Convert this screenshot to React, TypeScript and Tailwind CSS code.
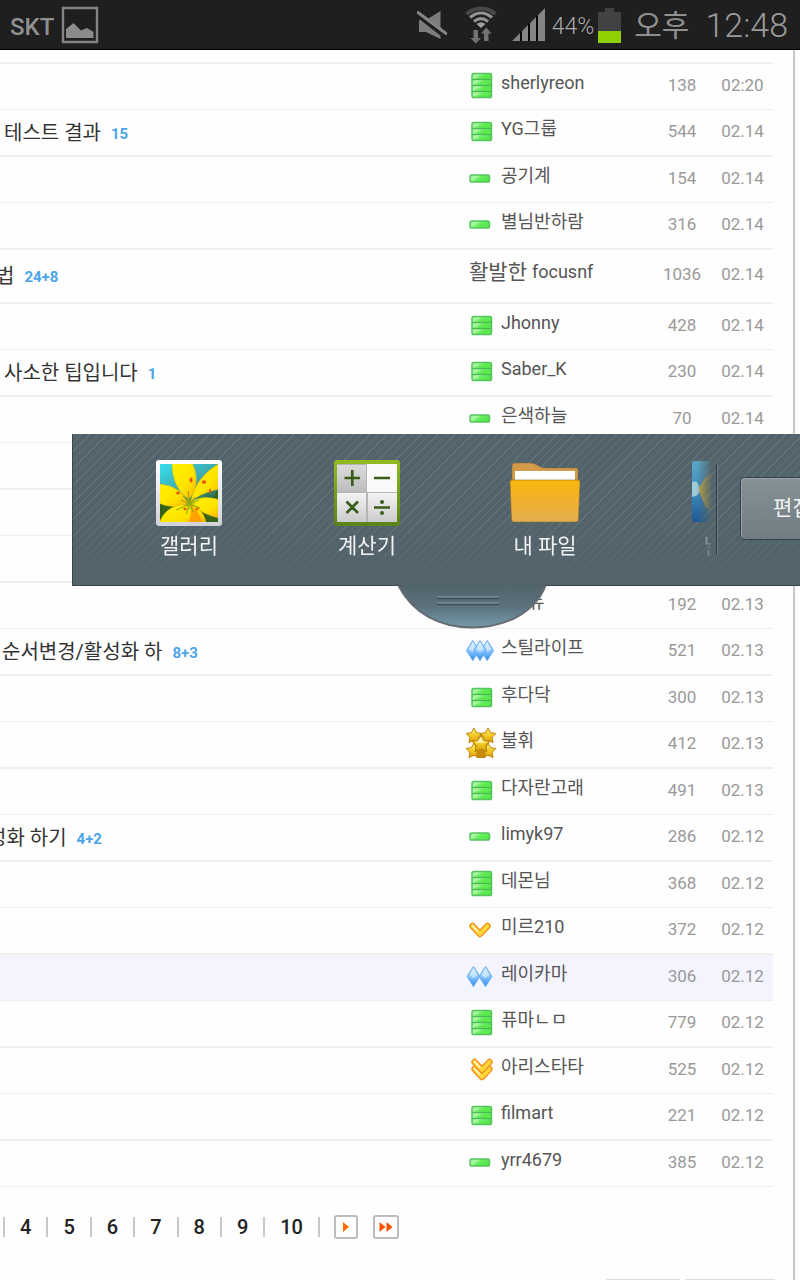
import React from "react";

type Rank = "bar1" | "bar3" | "bar4" | "chevron1" | "chevron2" | "gem2" | "gem3" | "stars" | "word" | "none";

interface Post {
  title?: string;
  indent?: string;
  comments?: string;
  rank: Rank;
  author: string;
  views?: number;
  date?: string;
  thick?: boolean;
  tall?: boolean;
  active?: boolean;
}

const posts: Post[] = [
  { rank: "bar4", author: "sherlyreon", views: 138, date: "02:20" },
  { title: "테스트 결과", indent: "pl-1", comments: "15", rank: "bar3", author: "YG그룹", views: 544, date: "02.14", thick: true },
  { rank: "bar1", author: "공기계", views: 154, date: "02.14" },
  { rank: "bar1", author: "별님반하람", views: 316, date: "02.14", thick: true },
  { title: "법", indent: "-ml-1", comments: "24+8", rank: "word", author: "focusnf", views: 1036, date: "02.14", thick: true, tall: true },
  { rank: "bar3", author: "Jhonny", views: 428, date: "02.14" },
  { title: "사소한 팁입니다", indent: "pl-1", comments: "1", rank: "bar3", author: "Saber_K", views: 230, date: "02.14", thick: true },
  { rank: "bar1", author: "은색하늘", views: 70, date: "02.14" },
  { rank: "none", author: "", thick: true },
  { rank: "none", author: "" },
  { rank: "none", author: "", thick: true },
  { rank: "none", author: "듀", views: 192, date: "02.13" },
  { title: "순서변경/활성화 하", comments: "8+3", rank: "gem3", author: "스틸라이프", views: 521, date: "02.13", thick: true },
  { rank: "bar3", author: "후다닥", views: 300, date: "02.13" },
  { rank: "stars", author: "불휘", views: 412, date: "02.13", thick: true },
  { rank: "bar3", author: "다자란고래", views: 491, date: "02.13" },
  { title: "성화 하기", indent: "-ml-3", comments: "4+2", rank: "bar1", author: "limyk97", views: 286, date: "02.12", thick: true },
  { rank: "bar4", author: "데몬님", views: 368, date: "02.12" },
  { rank: "chevron1", author: "미르210", views: 372, date: "02.12", thick: true },
  { rank: "gem2", author: "레이카마", views: 306, date: "02.12", active: true },
  { rank: "bar4", author: "퓨마ㄴㅁ", views: 779, date: "02.12", thick: true },
  { rank: "chevron2", author: "아리스타타", views: 525, date: "02.12" },
  { rank: "bar3", author: "filmart", views: 221, date: "02.12", thick: true },
  { rank: "bar1", author: "yrr4679", views: 385, date: "02.12" },
];

function Bars({ count }: { count: number }) {
  const x = count === 1 ? 4 : 6;
  const height = count === 1 ? 7 : count * 6;
  const top = count === 1 ? 12 : 15.5 - height / 2;
  const step = height / count;
  return (
    <>
      {Array.from({ length: count }, (_, i) => (
        <rect key={i} x={x} y={top + i * step} width="19.5" height={step} fill="url(#barFill)" />
      ))}
      {Array.from({ length: count - 1 }, (_, i) => (
        <path key={i} d={`M${x} ${top + (i + 1) * step}h19.5`} stroke="#4cb852" strokeWidth="1.3" />
      ))}
      <rect x={x} y={top} width="19.5" height={height} rx="1.8" fill="none" stroke="#56c45e" strokeWidth="1.5" />
    </>
  );
}

function Gem({ x }: { x: number }) {
  return (
    <>
      <path d={`M${x} 5.5L${x + 6.3} 15.5L${x} 25.5L${x - 6.3} 15.5Z`} fill="url(#gemFill)" stroke="#5aa7f2" strokeWidth="1" />
      <path d={`M${x} 7.5L${x + 4} 14L${x} 17L${x - 4} 14Z`} fill="#e2f3ff" opacity="0.65" />
    </>
  );
}

function Chevron({ x, y }: { x: number; y: number }) {
  const d = `M${x + 3} ${y + 3}L${x + 10.5} ${y + 11}L${x + 18} ${y + 3}`;
  return (
    <>
      <path d={d} fill="none" stroke="#f7921f" strokeWidth="6.4" strokeLinejoin="round" strokeLinecap="round" />
      <path d={d} fill="none" stroke="#ffd83a" strokeWidth="3.6" strokeLinejoin="round" strokeLinecap="round" />
      <path d={`M${x + 3} ${y + 2.5}L${x + 8} ${y + 8}`} fill="none" stroke="#fff3c4" strokeWidth="1.8" strokeLinecap="round" />
    </>
  );
}

const starPath = "M0-7.5L2.6-2.8L7.8-2L4.2 1.8L5 7L0 4.8L-5 7L-4.2 1.8L-7.8-2L-2.6-2.8Z";

function RankIcon({ rank }: { rank: Rank }) {
  return (
    <svg viewBox="0 0 30 30" className="size-[30px] shrink-0" aria-hidden="true">
      {rank === "bar1" && <Bars count={1} />}
      {rank === "bar3" && <Bars count={3} />}
      {rank === "bar4" && <Bars count={4} />}
      {rank === "gem3" && (<><Gem x={6.8} /><Gem x={21.2} /><Gem x={14} /></>)}
      {rank === "gem2" && (<><Gem x={7.5} /><Gem x={19.5} /></>)}
      {rank === "chevron1" && <Chevron x={3.5} y={9} />}
      {rank === "chevron2" && (<><Chevron x={5.5} y={12} /><Chevron x={5.5} y={5} /></>)}
      {rank === "stars" && (
        <g stroke="#bd830c" strokeWidth="1" strokeLinejoin="round" fill="url(#starFill)">
          <path d={starPath} transform="translate(8 7.500)" />
          <path d={starPath} transform="translate(22 7.500)" />
          <path d={starPath} transform="translate(8 22.500)" />
          <path d={starPath} transform="translate(22 22.500)" />
          <path d="M11 19H19V29.500H11Z" fill="#c88a0a" />
          <path d={starPath} transform="translate(15 15.500) scale(1.15)" />
          <path d="M15 9L17.500 14L21 15H10Z" fill="#fff8c0" stroke="none" opacity="0.8" />
        </g>
      )}
    </svg>
  );
}

function SharedGradients() {
  return (
    <svg className="absolute size-0" aria-hidden="true">
      <defs>
        <linearGradient id="barFill" x1="0" x2="1" y1="0" y2="0.5">
          <stop offset="0" stopColor="#7ef078" />
          <stop offset="0.3" stopColor="#b2f8a8" />
          <stop offset="0.6" stopColor="#62ec57" />
          <stop offset="1" stopColor="#58e84c" />
        </linearGradient>
        <linearGradient id="gemFill" x1="0" x2="0" y1="0" y2="1">
          <stop offset="0" stopColor="#d6edff" />
          <stop offset="0.5" stopColor="#8ac6fb" />
          <stop offset="1" stopColor="#2f8df2" />
        </linearGradient>
        <linearGradient id="starFill" x1="0" x2="0" y1="0" y2="1">
          <stop offset="0" stopColor="#fff08a" />
          <stop offset="0.5" stopColor="#f4cc24" />
          <stop offset="1" stopColor="#dca00e" />
        </linearGradient>
      </defs>
    </svg>
  );
}

function StatusBar() {
  return (
    <header className="flex h-[50px] items-center border-b border-black bg-[#1f1f1f] pr-3 pl-[10px] text-[#909090]">
      <span className="w-[51px] pt-1 font-['Roboto',sans-serif] text-[24px] leading-none font-medium">SKT</span>
      <svg viewBox="0 0 38 38" className="size-[38px]" aria-label="사진">
        <path d="M2 2H36V36H2Z" fill="none" stroke="#858585" strokeWidth="2.4" />
        <path d="M5 32V23L12.500 17L20 24.500L26 22L32.500 26V32Z" fill="#8c8c8c" />
      </svg>
      <div className="ml-auto flex items-center">
        <svg viewBox="0 0 30 30" className="mr-[18px] size-[30px]" aria-label="음소거">
          <path d="M2 10H9L23.500 1V29L9 22H2Z" fill="#7c7c7c" />
          <path d="M0 3.500L30 27" stroke="#1f1f1f" strokeWidth="6" />
          <path d="M1 2.500L29 23.500" stroke="#858585" strokeWidth="3" strokeLinecap="round" />
        </svg>
        <svg viewBox="0 0 32 38" className="mr-[15px] h-[38px] w-8" aria-label="와이파이">
          <g fill="none">
            <path d="M1.500 8C10 0.500 22 0.500 30.500 8" stroke="#484848" strokeWidth="4" />
            <path d="M5 11.500C12 5.500 20 5.500 27 11.500" stroke="#929292" strokeWidth="3.200" />
            <path d="M9 15.500C14 11.500 18 11.500 23 15.500" stroke="#929292" strokeWidth="3.200" />
          </g>
          <path d="M11.500 18Q16 14.500 20.500 18L16 22Z" fill="#a0a0a0" />
          <path d="M8.500 24H13V32H16L10.800 37.500L5.500 32H8.500ZM19 35V27.500H16L21.300 21.500L26.500 27.500H23.500V35Z" fill="#727272" />
        </svg>
        <svg viewBox="0 0 34 34" className="mr-[6px] size-[34px]" aria-label="신호">
          <path d="M0 33L33 0V33Z" fill="#080808" />
          <path d="M0 33L8 25V33ZM10 33V23L16 17V33ZM18 33V15L24 9V33ZM26 33V7L33 0V33Z" fill="#848484" />
        </svg>
        <span className="mr-1 pt-1 font-['Roboto',sans-serif] text-[23px] leading-none font-light text-[#aaaaaa]">44%</span>
        <svg viewBox="0 0 23 36" className="mr-[13px] h-9 w-[23px]" aria-label="배터리">
          <path d="M0 5H7V1H16V5H23V24H0Z" fill="#424242" />
          <path d="M0 24H23V36H0Z" fill="#91d000" />
        </svg>
        <span className="mr-4 pb-1 font-['Noto_Sans_CJK_KR',sans-serif] text-[30px] leading-none">오후</span>
        <time className="font-['Roboto',sans-serif] text-[34px] leading-none font-light text-[#9a9a9a]">12:48</time>
      </div>
    </header>
  );
}

function PostTable() {
  return (
    <table className="w-full table-fixed border-separate border-spacing-0 border-t-2 border-[#efefef]">
      <colgroup>
        <col />
        <col className="w-[186px]" />
        <col className="w-[60px]" />
        <col className="w-[61px]" />
      </colgroup>
      <tbody>
        {posts.map((p, i) => {
          const line = `${p.tall ? "h-[54px]" : p.thick ? "h-[47px]" : "h-[46px]"} ${p.thick ? "border-b-2" : "border-b"} border-[#efefef] ${p.active ? "bg-[#f4f4ff]" : ""}`;
          const meta = `${line} pb-1 text-center text-[17px] leading-6 text-[#999999]`;
          return (
            <tr key={i}>
              <td className={`${line} overflow-hidden whitespace-nowrap`}>
                {p.title && (
                  <div className={`flex items-center gap-[10px] ${p.indent ?? "pl-[2px]"}`}>
                    <a href="#" className="text-[20px] leading-7 text-[#333333]">{p.title}</a>
                    <a href="#" className="pt-[2px] text-[15px] leading-6 font-bold text-[#4ba5e9]">{p.comments}</a>
                  </div>
                )}
              </td>
              <td className={`${line} pb-1`}>
                <div className="flex items-center gap-[5px] text-[#555555]">
                  {p.rank === "word" ? (
                    <span className="pb-1 pl-[3px] text-[21px] leading-6">활발한</span>
                  ) : (
                    <RankIcon rank={p.rank} />
                  )}
                  <a href="#" className={`pb-1 text-[18px] leading-6 ${p.rank === "none" ? "pl-[27px]" : ""}`}>{p.author}</a>
                </div>
              </td>
              <td className={meta}>{p.views}</td>
              <td className={meta}>{p.date}</td>
            </tr>
          );
        })}
      </tbody>
    </table>
  );
}

function Pagination() {
  return (
    <nav className="mt-7 flex items-center pl-[3px]" aria-label="페이지">
      {[4, 5, 6, 7, 8, 9, 10].map((n) => (
        <a key={n} href="#" className="border-l-2 border-[#c8c8c8] px-[15px] text-[20px] leading-5 font-medium text-[#222222]">{n}</a>
      ))}
      <span className="h-5 border-l-2 border-[#c8c8c8]" />
      <button aria-label="다음" className="ml-[14px] flex h-6 w-6 items-center justify-center rounded-[3px] border-2 border-[#bcbcbc] bg-white">
        <svg viewBox="0 0 8 12" className="h-3 w-2"><path d="M1 1L7 6L1 11Z" fill="#ff6a00" /></svg>
      </button>
      <button aria-label="마지막" className="ml-[15px] flex h-6 w-[26px] items-center justify-center rounded-[3px] border-2 border-[#bcbcbc] bg-white">
        <svg viewBox="0 0 14 12" className="h-3 w-[14px]"><path d="M0.500 1L6.500 6L0.500 11ZM7.500 1L13.500 6L7.500 11Z" fill="#ff5200" /></svg>
      </button>
    </nav>
  );
}

function GalleryIcon() {
  return (
    <svg viewBox="0 0 66 66" className="size-[66px]" aria-hidden="true">
      <defs>
        <linearGradient id="frame" x1="0" x2="0" y1="0" y2="1"><stop stopColor="#ffffff" /><stop offset="1" stopColor="#cfd2d8" /></linearGradient>
        <linearGradient id="sky" x1="0" x2="0.6" y1="0" y2="1"><stop stopColor="#35e0ee" /><stop offset="0.5" stopColor="#3fa5ab" /><stop offset="1" stopColor="#27561c" /></linearGradient>
        <linearGradient id="petal" x1="0" x2="1" y1="0" y2="1"><stop stopColor="#fff200" /><stop offset="0.6" stopColor="#ffe300" /><stop offset="1" stopColor="#ffb000" /></linearGradient>
        <clipPath id="photo"><path d="M4 4H62V62H4Z" /></clipPath>
      </defs>
      <rect width="66" height="66" rx="3" fill="url(#frame)" />
      <g clipPath="url(#photo)">
        <path d="M4 4H62V62H4Z" fill="url(#sky)" />
        <path d="M4 44L30 46L16 62H4ZM50 50L62 30V62H50Z" fill="#356318" />
        <g fill="url(#petal)" stroke="#e0b400" strokeWidth="0.500">
          <path d="M16 3C16 18 21 32 33 39C41 30 43 16 36 3Z" />
          <path d="M35 40C39 24 48 12 64 3V29C54 31 43 34 35 42Z" />
          <path d="M3 24C16 25 27 31 32 43C22 48 11 47 3 43Z" />
          <path d="M36 42C44 36 54 37 64 40V58C52 56 43 51 36 45Z" />
          <path d="M33 45C45 47 50 57 50 64H3C7 51 18 43 33 45Z" />
        </g>
        <path d="M32 64C34 58 36 52 35 46C42 50 45 57 46 64Z" fill="#ff9a00" opacity="0.850" />
        <path d="M34 44L25 40M34 44L20 50M34 44L32 31M34 44L44 48M34 44L39 37M34 44L30 54M34 44L43 40M34 44L27 36M34 44L37 52" stroke="#8c9f0c" strokeWidth="1" />
        <path d="M30 40Q34 36 39 43Q38 50 31 50Z" fill="#a9b30b" opacity="0.500" />
        <g fill="#e2560b"><ellipse cx="35" cy="20" rx="1.600" ry="2.600" /><ellipse cx="48" cy="22" rx="2.200" ry="1.800" /><ellipse cx="22" cy="33" rx="1.800" ry="1.600" /><ellipse cx="54" cy="31" rx="1" ry="2.500" /><ellipse cx="29" cy="49" rx="1.600" ry="1.200" /><ellipse cx="41" cy="49" rx="1.400" ry="1.400" /></g>
      </g>
    </svg>
  );
}

function CalculatorIcon() {
  return (
    <svg viewBox="0 0 66 66" className="size-[66px]" aria-hidden="true">
      <defs>
        <linearGradient id="calcRim" x1="0" x2="0" y1="0" y2="1"><stop stopColor="#92bb20" /><stop offset="1" stopColor="#5a8217" /></linearGradient>
        <linearGradient id="keyDark" x1="0" x2="0" y1="0" y2="1"><stop stopColor="#dcdcdc" /><stop offset="1" stopColor="#bcbcbc" /></linearGradient>
        <linearGradient id="keyLight" x1="0" x2="0" y1="0" y2="1"><stop stopColor="#f4f4f4" /><stop offset="1" stopColor="#cbcbcb" /></linearGradient>
      </defs>
      <rect width="66" height="66" rx="3" fill="url(#calcRim)" />
      <path d="M3 4H63V62H3Z" fill="#b5b5b5" />
      <path d="M3 5H32V32H3Z" fill="url(#keyDark)" />
      <path d="M33 4H63V32H33Z" fill="#fafafa" />
      <path d="M3 33H32V62H3ZM34 33H63V62H34Z" fill="url(#keyLight)" />
      <path d="M10.500 18H26M18.300 10V26M40 18H56M12.500 41.500L24 53M24 41.500L12.500 53M40 47.500H56" stroke="#3b5d1c" strokeWidth="2.700" />
      <circle cx="48" cy="42" r="2" fill="#3b5d1c" /><circle cx="48" cy="53" r="2" fill="#3b5d1c" />
    </svg>
  );
}

function FolderIcon() {
  return (
    <svg viewBox="0 0 72 66" className="h-[66px] w-[72px]" aria-hidden="true">
      <defs>
        <linearGradient id="folder" x1="0" x2="0" y1="0" y2="1"><stop stopColor="#fab60b" /><stop offset="1" stopColor="#e4ad50" /></linearGradient>
      </defs>
      <path d="M3 25V6Q3 3 6 3H21C28 3 30 8 36 8H67Q69 8 69 10V25Z" fill="#d39a4a" stroke="#82663d" strokeWidth="0.500" />
      <path d="M6 11H66V24H6Z" fill="#ffffff" />
      <path d="M1 22Q1 20 3 20H69Q71 20 71 22L69.500 59Q69.500 62 67 62H5Q2.500 62 2.500 59Z" fill="url(#folder)" stroke="#8d6b2d" strokeWidth="0.600" />
    </svg>
  );
}

function WeatherIcon() {
  return (
    <svg viewBox="0 0 62 66" className="h-[66px] w-[62px]" aria-hidden="true">
      <defs>
        <linearGradient id="weather" x1="0" x2="0" y1="0" y2="1"><stop stopColor="#5ca9c8" /><stop offset="0.500" stopColor="#3a8dc0" /><stop offset="1" stopColor="#1c5796" /></linearGradient>
      </defs>
      <rect y="1" width="62" height="61" rx="3" fill="url(#weather)" />
      <path d="M6 29L14 16L34 2V58L14 48Z" fill="#d8ad35" opacity="0.850" />
      <path d="M0 22Q7 20 7 28Q9 36 0 37Z" fill="#b9dbe4" opacity="0.800" />
    </svg>
  );
}

const apps = [
  { label: "갤러리", icon: <GalleryIcon /> },
  { label: "계산기", icon: <CalculatorIcon /> },
  { label: "내 파일", icon: <FolderIcon /> },
  { label: "날씨", icon: <WeatherIcon /> },
];

function AppTray() {
  return (
    <aside className="absolute top-[434px] right-0 left-[72px]">
      <div className="flex h-[152px] overflow-hidden border-b border-l border-[#3d4347] bg-[#52636b] bg-[linear-gradient(to_bottom,transparent_55%,#52636b_98%),repeating-linear-gradient(135deg,#627279_0px,#627279_1px,transparent_1px,transparent_6px)] pl-[27px]">
        <ul className="flex min-w-0 flex-1 overflow-hidden [mask-image:linear-gradient(to_right,black_calc(100%-20px),transparent_calc(100%-4px))]">
          {apps.map((a) => (
            <li key={a.label} className="w-[178px] shrink-0 pt-[26px]">
              <button className="flex w-full flex-col items-center gap-1 text-[#f2f2f2]">
                {a.icon}
                <span className="text-[21px] leading-8">{a.label}</span>
              </button>
            </li>
          ))}
        </ul>
        <div className="my-[30px] border-r border-l border-r-[#6b7b83] border-l-[#303b42]" />
        <div className="w-[82px] shrink-0 pt-[43px] pl-[22px]">
          <button className="h-[63px] w-[128px] rounded-[4px] border border-[#343e45] bg-linear-to-b from-[#879297] to-[#707c82] pl-8 text-left text-[21px] text-[#f2f2f2] shadow-[inset_1px_1px_0_#9ba5a9]">편집</button>
        </div>
      </div>
      <button aria-label="트레이 닫기" className="absolute top-[151px] left-[325px]">
        <svg viewBox="0 0 150 44" className="h-11 w-[150px]">
          <defs>
            <linearGradient id="handle" x1="0" x2="0" y1="0" y2="1"><stop stopColor="#52636b" /><stop offset="0.500" stopColor="#5b717c" /><stop offset="1" stopColor="#7599aa" /></linearGradient>
          </defs>
          <path d="M1.500 0C16 28 42 42.500 75 42.500S138 28 148.500 0Z" fill="url(#handle)" />
          <path d="M1.500 1C16 28 42 42.500 75 42.500S138 28 148.500 1" fill="none" stroke="#656b6f" strokeWidth="1.800" />
          <path d="M40 13.500H102M40 19.500H102" stroke="#3c4c55" strokeWidth="1.500" />
          <path d="M40 12H102M40 18H102" stroke="#8398a2" strokeWidth="1" />
        </svg>
      </button>
    </aside>
  );
}

export default function App() {
  return (
    <div className="relative flex min-h-screen flex-col overflow-hidden bg-[#fefefe] font-['Roboto','Noto_Sans_CJK_KR',sans-serif]">
      <SharedGradients />
      <StatusBar />
      <main className="mr-[5px] flex flex-1 flex-col border-r-2 border-[#c8c8c8] pt-3">
        <div className="pr-5">
          <PostTable />
        </div>
        <Pagination />
        <div className="mt-auto flex justify-end gap-[5px] pr-[18px]">
          <div className="w-[74px] border-t border-[#dddddd]" />
          <div className="w-[90px] border-t border-[#dddddd]" />
        </div>
      </main>
      <AppTray />
    </div>
  );
}
